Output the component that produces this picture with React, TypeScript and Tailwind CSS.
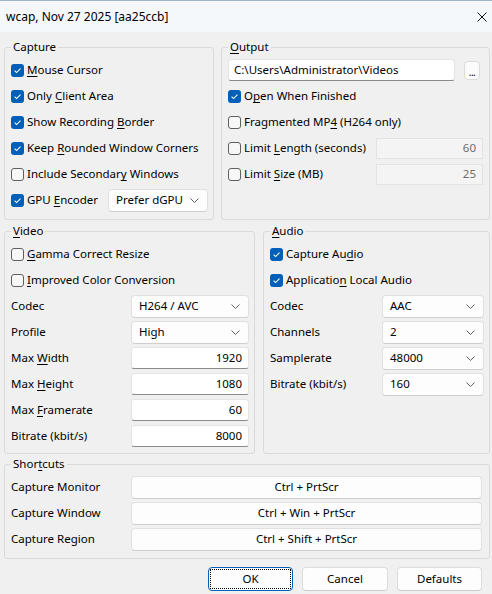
import type { ReactNode } from "react";

const FONT = { fontFamily: '"Segoe UI", "Noto Sans", "Open Sans", sans-serif' };

function Key({ children }: { children: ReactNode }) {
  return <u className="underline underline-offset-[2px] decoration-[1px]">{children}</u>;
}

function Check({ checked, children }: { checked?: boolean; children: ReactNode }) {
  return (
    <div className="flex h-[26px] items-center gap-[3px]">
      {checked ? (
        <span className="flex h-[13px] w-[13px] shrink-0 items-center justify-center rounded-[3px] bg-[#005fb8]">
          <svg width="13" height="13" viewBox="0 0 13 13">
            <path d="M3.6 6.7 L5.6 8.6 L9.5 4.6" fill="none" stroke="#fff" strokeWidth="1.1" />
          </svg>
        </span>
      ) : (
        <span className="h-[13px] w-[13px] shrink-0 rounded-[3px] border border-[#5f5f5f] bg-[#f7f7f7]" />
      )}
      <span className="whitespace-nowrap">{children}</span>
    </div>
  );
}

function Chevron() {
  return (
    <svg width="9" height="5" viewBox="0 0 9 5" className="shrink-0">
      <path d="M0.5 0.5 L4.5 4.5 L8.5 0.5" fill="none" stroke="#606060" strokeWidth="1" />
    </svg>
  );
}

function Select({ value, w }: { value: string; w: string }) {
  return (
    <div
      className={`flex h-[23px] ${w} items-center justify-between rounded-[4px] border border-[#e0e0e0] border-b-[#cfcfcf] bg-[#fdfdfd] pl-[7px] pr-[8px]`}
    >
      <span className="whitespace-nowrap">{value}</span>
      <Chevron />
    </div>
  );
}

function NumInput({ value, w }: { value: string; w: string }) {
  return (
    <div
      className={`flex h-[22px] ${w} items-center justify-end rounded-[3px] border border-[#e4e4e4] border-b-[#8a8a8a] bg-white pr-[6px]`}
    >
      {value}
    </div>
  );
}

function Group({ label, children, className = "" }: { label: ReactNode; children: ReactNode; className?: string }) {
  return (
    <div className={`rounded-[3px] border border-[#dadada] ${className}`}>
      <div className="-mt-[9px] ml-[6px] w-fit bg-[#f0f0f0] px-[2px] leading-[16px]">{label}</div>
      {children}
    </div>
  );
}

function Row({ label, children }: { label: ReactNode; children: ReactNode }) {
  return (
    <div className="flex h-[26px] items-center justify-between">
      <span className="whitespace-nowrap">{label}</span>
      {children}
    </div>
  );
}

function Shortcut({ label, keys }: { label: string; keys: string }) {
  return (
    <div className="flex h-[26px] items-center justify-between">
      <span>{label}</span>
      <div className="flex h-[23px] w-[351px] items-center justify-center rounded-[4px] border border-[#e0e0e0] border-b-[#cdcdcd] bg-[#fdfdfd]">
        {keys}
      </div>
    </div>
  );
}

export default function App() {
  return (
    <div className="h-[594px] w-[492px] overflow-hidden bg-[#f0f0f0] text-[11.5px] text-black" style={FONT}>
      {/* title bar */}
      <div className="flex h-[32px] items-center justify-between border-t border-[#9fb3cb] bg-[#f5f8fb] pl-[6px] pr-[5px]">
        <span className="text-[12px]">wcap, Nov 27 2025 [aa25ccb]</span>
        <svg width="10" height="10" viewBox="0 0 10 10">
          <path d="M0.5 0.5 L9.5 9.5 M9.5 0.5 L0.5 9.5" stroke="#111" strokeWidth="1" />
        </svg>
      </div>

      <div className="pl-[4px] pr-[2px]">
        {/* capture / output */}
        <div className="mt-[15px] grid grid-cols-[210px_1fr] gap-x-[7px]">
          <Group label="Capture">
            <div className="pb-[6px] pl-[6px] pr-[5px] pt-[2px]">
              <Check checked>
                <Key>M</Key>ouse Cursor
              </Check>
              <Check checked>
                Only <Key>C</Key>lient Area
              </Check>
              <Check checked>
                Show Recording <Key>B</Key>order
              </Check>
              <Check checked>
                Keep <Key>R</Key>ounded Window Corners
              </Check>
              <Check>
                Include Secondar<Key>y</Key> Windows
              </Check>
              <div className="flex h-[26px] items-center justify-between">
                <Check checked>
                  GPU <Key>E</Key>ncoder
                </Check>
                <Select value="Prefer dGPU" w="w-[100px]" />
              </div>
            </div>
          </Group>

          <Group
            label={
              <>
                <Key>O</Key>utput
              </>
            }
          >
            <div className="pl-[6px] pr-[6px] pt-[2px]">
              <div className="flex h-[26px] items-center">
                <div className="flex h-[22px] w-[227px] items-center rounded-[3px] border border-[#e4e4e4] border-b-[#8a8a8a] bg-white pl-[5px]">
                  C:\Users\Administrator\Videos
                </div>
                <div className="ml-[9px] flex h-[19px] w-[16px] items-end justify-center rounded-[4px] border border-[#dcdcdc] bg-[#fbfbfb] pb-[3px]">
                  <span className="text-[10px] leading-[8px] tracking-[-0.5px]">...</span>
                </div>
              </div>
              <Check checked>
                O<Key>p</Key>en When Finished
              </Check>
              <Check>
                Fragmented MP<Key>4</Key> (H264 only)
              </Check>
              <div className="flex h-[26px] items-center justify-between">
                <Check>
                  Limit <Key>L</Key>ength (seconds)
                </Check>
                <div className="flex h-[21px] w-[107px] items-center justify-end border border-[#e3e3e3] bg-[#f4f4f4] pr-[6px] text-[#6d6d6d]">
                  60
                </div>
              </div>
              <div className="flex h-[26px] items-center justify-between">
                <Check>
                  Limit <Key>S</Key>ize (MB)
                </Check>
                <div className="flex h-[21px] w-[107px] items-center justify-end border border-[#e3e3e3] bg-[#f4f4f4] pr-[6px] text-[#6d6d6d]">
                  25
                </div>
              </div>
            </div>
          </Group>
        </div>

        {/* video / audio */}
        <div className="mt-[11px] grid grid-cols-[251px_1fr] gap-x-[8px]">
          <Group
            label={
              <>
                <Key>V</Key>ideo
              </>
            }
          >
            <div className="pb-[4px] pl-[6px] pr-[5px] pt-[2px]">
              <Check>
                <Key>G</Key>amma Correct Resize
              </Check>
              <Check>
                <Key>I</Key>mproved Color Conversion
              </Check>
              <Row label="Codec">
                <Select value="H264 / AVC" w="w-[118px]" />
              </Row>
              <Row label="Profile">
                <Select value="High" w="w-[118px]" />
              </Row>
              <Row
                label={
                  <>
                    Max <Key>W</Key>idth
                  </>
                }
              >
                <NumInput value="1920" w="w-[118px]" />
              </Row>
              <Row
                label={
                  <>
                    Max <Key>H</Key>eight
                  </>
                }
              >
                <NumInput value="1080" w="w-[118px]" />
              </Row>
              <Row
                label={
                  <>
                    Max <Key>F</Key>ramerate
                  </>
                }
              >
                <NumInput value="60" w="w-[118px]" />
              </Row>
              <Row label="Bitrate (kbit/s)">
                <NumInput value="8000" w="w-[118px]" />
              </Row>
            </div>
          </Group>

          <Group
            label={
              <>
                <Key>A</Key>udio
              </>
            }
          >
            <div className="pl-[6px] pr-[5px] pt-[2px]">
              <Check checked>
                Capture Au<Key>d</Key>io
              </Check>
              <Check checked>
                Applicatio<Key>n</Key> Local Audio
              </Check>
              <Row label="Codec">
                <Select value="AAC" w="w-[102px]" />
              </Row>
              <Row label="Channels">
                <Select value="2" w="w-[102px]" />
              </Row>
              <Row label="Samplerate">
                <Select value="48000" w="w-[102px]" />
              </Row>
              <Row label="Bitrate (kbit/s)">
                <Select value="160" w="w-[102px]" />
              </Row>
            </div>
          </Group>
        </div>

        {/* shortcuts */}
        <Group
          className="mt-[10px]"
          label={
            <>
              Shor<Key>t</Key>cuts
            </>
          }
        >
          <div className="pb-[6px] pl-[6px] pr-[7px] pt-[2px]">
            <Shortcut label="Capture Monitor" keys="Ctrl + PrtScr" />
            <Shortcut label="Capture Window" keys="Ctrl + Win + PrtScr" />
            <Shortcut label="Capture Region" keys="Ctrl + Shift + PrtScr" />
          </div>
        </Group>
      </div>

      {/* dialog buttons */}
      <div className="mt-[8px] flex justify-end gap-[9px] pr-[10px]">
        <div className="flex h-[24px] w-[85px] rounded-[4px] border border-[#005fb8] bg-[#fdfdfd] p-[1px]">
          <div className="flex flex-1 items-center justify-center border border-dotted border-black">OK</div>
        </div>
        <div className="flex h-[24px] w-[86px] items-center justify-center rounded-[4px] border border-[#dcdcdc] border-b-[#cbcbcb] bg-[#fdfdfd]">
          Cancel
        </div>
        <div className="flex h-[24px] w-[85px] items-center justify-center rounded-[4px] border border-[#dcdcdc] border-b-[#cbcbcb] bg-[#fdfdfd]">
          Defaults
        </div>
      </div>
    </div>
  );
}
